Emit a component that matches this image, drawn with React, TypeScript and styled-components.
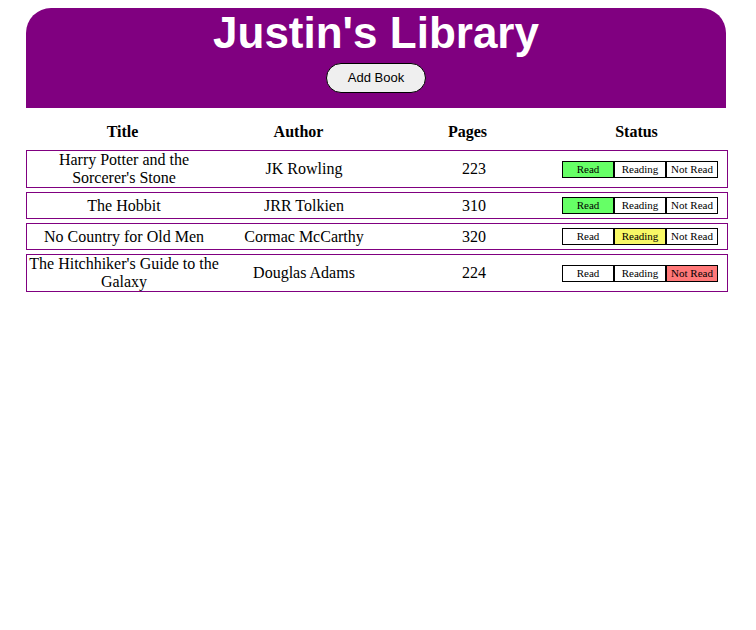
import React, { useState } from "react";
import styled, { createGlobalStyle } from "styled-components";

type Status = "Read" | "Reading" | "Not Read";

interface Book {
  title: string;
  author: string;
  pages: number;
  status: Status;
}

const STATUSES: Status[] = ["Read", "Reading", "Not Read"];

const STATUS_COLORS: Record<Status, string> = {
  Read: "#66ff66",
  Reading: "#f8f866",
  "Not Read": "#ff7878",
};

const INITIAL_BOOKS: Book[] = [
  { title: "Harry Potter and the Sorcerer's Stone", author: "JK Rowling", pages: 223, status: "Read" },
  { title: "The Hobbit", author: "JRR Tolkien", pages: 310, status: "Read" },
  { title: "No Country for Old Men", author: "Cormac McCarthy", pages: 320, status: "Reading" },
  { title: "The Hitchhiker's Guide to the Galaxy", author: "Douglas Adams", pages: 224, status: "Not Read" },
];

const GlobalStyle = createGlobalStyle`
  *, *::before, *::after {
    box-sizing: border-box;
  }
  body {
    margin: 0;
    background: #fff;
    color: #000;
    font: 16px/18px "Liberation Serif", "Times New Roman", serif;
  }
`;

const Page = styled.main`
  padding: 8px 28px 8px 26px;
`;

const Banner = styled.header`
  display: flex;
  flex-direction: column;
  align-items: center;
  gap: 5px;
  margin-right: 2px;
  padding-bottom: 15px;
  border-radius: 25px 25px 0 0;
  background: purple;
`;

const Heading = styled.h1`
  margin: 0;
  color: #fff;
  font: bold 44px/50px "Liberation Sans", Arial, sans-serif;
`;

const AddButton = styled.button`
  min-width: 100px;
  height: 30px;
  padding: 0 20px;
  border: 1px solid #000;
  border-radius: 15px;
  background: #efefef;
  color: #000;
  font: 13px/18px "Liberation Sans", Arial, sans-serif;
  cursor: pointer;
`;

const BookTable = styled.table`
  display: block;
  width: 100%;
`;

const TableHead = styled.thead`
  display: block;
  padding: 15px 0 9px;
`;

const HeadRow = styled.tr`
  display: grid;
  grid-template-columns: 193fr 159fr 179fr 159fr;
  padding-right: 12px;
`;

const HeadCell = styled.th`
  padding: 0;
  text-align: center;
`;

const TableBody = styled.tbody`
  display: grid;
  gap: 4px;
`;

const BookRow = styled.tr`
  display: grid;
  grid-template-columns: 194fr 166fr 174fr 158fr;
  align-items: center;
  min-height: 27px;
  padding-right: 8px;
  border: 1px solid purple;
`;

const Cell = styled.td`
  padding: 0 2px;
  text-align: center;
`;

const StatusCell = styled.td`
  display: flex;
  justify-content: center;
  padding: 0;
`;

const StatusButton = styled.button<{ $fill: string }>`
  width: 52px;
  padding: 0;
  border: 1px solid #000;
  background: ${({ $fill }) => $fill};
  color: #000;
  font: 11px/15px "Liberation Serif", "Times New Roman", serif;
  white-space: nowrap;
  cursor: pointer;
`;

export default function App() {
  const [books, setBooks] = useState<Book[]>(INITIAL_BOOKS);

  const setStatus = (title: string, status: Status) =>
    setBooks((current) => current.map((book) => (book.title === title ? { ...book, status } : book)));

  return (
    <>
      <GlobalStyle />
      <Page>
        <Banner>
          <Heading>Justin's Library</Heading>
          <AddButton type="button">Add Book</AddButton>
        </Banner>
        <BookTable role="table">
          <TableHead role="rowgroup">
            <HeadRow role="row">
              {["Title", "Author", "Pages", "Status"].map((label) => (
                <HeadCell key={label} scope="col" role="columnheader">
                  {label}
                </HeadCell>
              ))}
            </HeadRow>
          </TableHead>
          <TableBody role="rowgroup">
            {books.map((book) => (
              <BookRow key={book.title} role="row">
                <Cell role="cell">{book.title}</Cell>
                <Cell role="cell">{book.author}</Cell>
                <Cell role="cell">{book.pages}</Cell>
                <StatusCell role="cell">
                  {STATUSES.map((status) => (
                    <StatusButton
                      key={status}
                      type="button"
                      aria-pressed={book.status === status}
                      $fill={book.status === status ? STATUS_COLORS[status] : "#fff"}
                      onClick={() => setStatus(book.title, status)}
                    >
                      {status}
                    </StatusButton>
                  ))}
                </StatusCell>
              </BookRow>
            ))}
          </TableBody>
        </BookTable>
      </Page>
    </>
  );
}
